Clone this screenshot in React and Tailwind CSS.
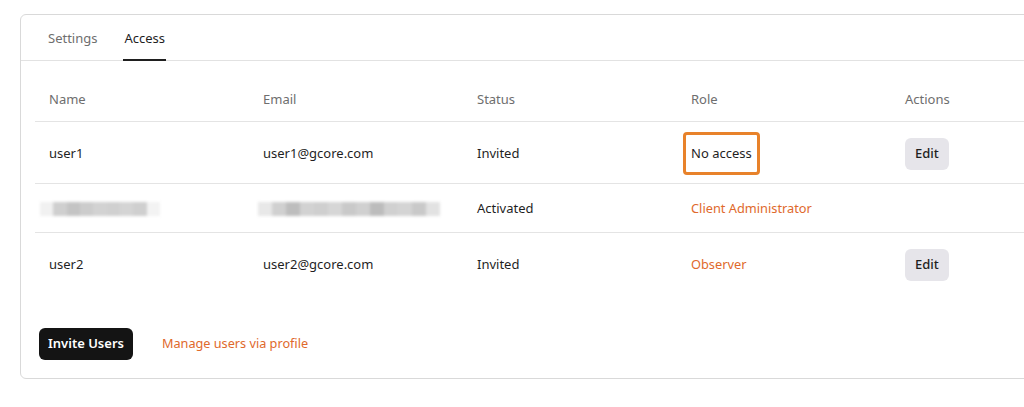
import React from 'react';

const users = [
  { name: 'user1', email: 'user1@gcore.com', status: 'Invited', role: 'No access', highlight: true, edit: true },
  { name: null, email: null, status: 'Activated', role: 'Client Administrator', edit: false },
  { name: 'user2', email: 'user2@gcore.com', status: 'Invited', role: 'Observer', edit: true },
];

const Blurred = ({ width, tones }) => (
  <div className="flex h-[14px] blur-[1.5px]" style={{ width }}>
    {tones.map((t, i) => (
      <div key={i} className="h-full flex-1" style={{ background: t }} />
    ))}
  </div>
);

export default function App() {
  return (
    <div className="w-[1024px] h-[407px] overflow-hidden bg-white pt-[14px] pl-[20px] font-['Noto_Sans',sans-serif] text-[13px] text-[#1f1f1f]">
      <div className="w-[1040px] h-[365px] border border-[#d9d9d9] rounded-md flex flex-col">
        {/* Tabs */}
        <div className="h-[46px] border-b border-[#e2e2e2] flex items-end gap-[27px] pl-[27px]">
          <div className="h-full flex items-center text-[#6e6e6e] pt-[3px]">Settings</div>
          <div className="h-full flex items-center relative pt-[3px]">
            Access
            <span className="absolute left-[-1px] right-[-1px] bottom-[-1px] h-[2px] bg-[#1f1f1f]" />
          </div>
        </div>

        {/* Table */}
        <div className="pl-[14px] pt-[17px]">
          <div className="grid grid-cols-[214px_214px_214px_214px_1fr] h-[44px] items-center border-b border-[#e4e4e4] text-[#6e6e6e] pt-[1px]">
            <div className="pl-[14px]">Name</div>
            <div className="pl-[14px]">Email</div>
            <div className="pl-[14px]">Status</div>
            <div className="pl-[14px]">Role</div>
            <div className="pl-[14px]">Actions</div>
          </div>
          {users.map((u, i) => (
            <div
              key={i}
              className={`grid grid-cols-[214px_214px_214px_214px_1fr] items-center pt-[2px] ${u.edit ? 'h-[62px]' : 'h-[49px]'} ${i < users.length - 1 ? 'border-b border-[#e4e4e4]' : ''}`}
            >
              <div className="pl-[14px]">
                {u.name ?? (
                  <div className="ml-[-9px]">
                    <Blurred width={120} tones={['#f1f1f1', '#cfcfcf', '#c4c4c4', '#cccccc', '#d2d2d2', '#d0d0d0', '#d4d4d4', '#cfcfcf', '#f3f3f3']} />
                  </div>
                )}
              </div>
              <div className="pl-[14px]">
                {u.email ?? (
                  <div className="ml-[-5px]">
                    <Blurred width={182} tones={['#e8e8e8', '#d0d0d0', '#bdbdbd', '#d2d2d2', '#cfcfcf', '#d6d6d6', '#c9c9c9', '#d0d0d0', '#bcbcbc', '#d0d0d0', '#d4d4d4', '#c9c9c9', '#e2e2e2']} />
                  </div>
                )}
              </div>
              <div className="pl-[14px]">{u.status}</div>
              <div className="pl-[14px]">
                {u.highlight ? (
                  <span className="inline-flex items-center h-[43px] ml-[-8px] px-[5px] border-[3px] border-[#e8822a] rounded-[4px]">
                    {u.role}
                  </span>
                ) : (
                  <span className="text-[#e0692c] text-[12.8px]">{u.role}</span>
                )}
              </div>
              <div className="pl-[14px]">
                {u.edit && (
                  <button className="h-[32px] px-[10px] rounded-md bg-[#e6e5ea] text-[#1f1f1f] font-medium">Edit</button>
                )}
              </div>
            </div>
          ))}
        </div>

        {/* Footer */}
        <div className="mt-auto pb-[18px] pl-[18px] flex items-center gap-[29px]">
          <button className="h-[32px] px-[9px] rounded-md bg-[#141414] text-white font-semibold">Invite Users</button>
          <a href="#" className="text-[#e0692c] text-[12.7px]">Manage users via profile</a>
        </div>
      </div>
    </div>
  );
}
